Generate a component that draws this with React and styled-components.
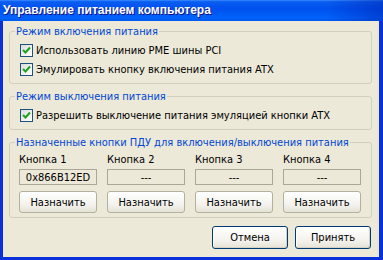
import React from 'react'
import styled, { createGlobalStyle } from 'styled-components'

const Global = createGlobalStyle`
  html, body { margin: 0; padding: 0; background: #ffffff; }
  * { box-sizing: border-box; }
`

const uiFont = `"DejaVu Sans Condensed", "DejaVu Sans", sans-serif`

const Window = styled.div`
  width: 383px;
  height: 260px;
  display: flex;
  flex-direction: column;
  background: #0831d9;
  font-family: ${uiFont};
  font-size: 11px;
  color: #000;
  overflow: hidden;
`

const TitleBar = styled.div`
  height: 21px;
  flex: none;
  display: flex;
  align-items: center;
  padding: 0 0 2px 3px;
  background: linear-gradient(90deg, transparent 85%, rgba(0, 30, 170, 0.45) 100%),
    linear-gradient(180deg, #3d8cff 0%, #0a5ef0 8%, #0050ee 40%, #0062fa 85%, #0059f0 100%);
  color: #fff;
  font-family: "Liberation Sans", Arial, sans-serif;
  font-weight: bold;
  font-size: 12px;
  text-shadow: 1px 1px #0f1089;
`

const Body = styled.div`
  flex: 1;
  min-height: 0;
  margin: 0 4px 3px 3px;
  background: #ece9d8;
  padding: 4px 7px 8px 6px;
  display: flex;
  flex-direction: column;
  gap: 6px;
`

const Group = styled.fieldset`
  margin: 0;
  border: 1px solid #d0d0bf;
  border-radius: 3px;
  padding: ${({ $pad }) => $pad || '3px 8px 4px 10px'};
  min-width: 0;
`

const Legend = styled.legend`
  color: #0046d5;
  padding: 0 1px;
  margin-left: ${({ $shift }) => $shift || '-5px'};
  line-height: 13px;
  white-space: nowrap;
`

const CheckRow = styled.label`
  display: flex;
  align-items: center;
  gap: 3px;
  height: 19px;
`

const Box = styled.span`
  width: 13px;
  height: 13px;
  flex: none;
  border: 1px solid #1c5180;
  background: linear-gradient(135deg, #dcdcd7, #ffffff);
  display: flex;
  align-items: center;
  justify-content: center;
`

const Keys = styled.div`
  display: grid;
  grid-template-columns: repeat(4, 78px);
  column-gap: 10px;
`

const KeyCol = styled.div`
  display: flex;
  flex-direction: column;
`

const KeyLabel = styled.div`
  line-height: 15px;
  height: 15px;
`

const Field = styled.div`
  margin-top: 2px;
  height: 16px;
  border: 1px solid #aca899;
  background: #ece9d8;
  display: flex;
  align-items: center;
  justify-content: center;
`

const Button = styled.button`
  margin: 0;
  padding: 0;
  font-family: ${uiFont};
  font-size: 11px;
  color: #000;
  width: ${({ $w }) => $w || '78px'};
  height: ${({ $h }) => $h || '22px'};
  border-radius: 3px;
  border: 1px solid ${({ $primary }) => ($primary ? '#003c74' : '#b3b09d')};
  background: linear-gradient(180deg, #ffffff 0%, #f4f3ee 60%, #e6e3d6 100%);
  box-shadow: ${({ $primary }) =>
    $primary ? 'inset -1px -1px 0 #d6d0c5, inset 1px 1px 0 #fff' : 'none'};
`

const AssignButton = styled(Button)`
  margin-top: 6px;
`

const Footer = styled.div`
  display: flex;
  justify-content: flex-end;
  gap: 7px;
  padding: 2px 1px 0 0;
`

const Check = () => (
  <svg width="9" height="9" viewBox="0 0 9 9">
    <path d="M1 4 L3.5 6.5 L8 1.5" fill="none" stroke="#21a121" strokeWidth="2" />
  </svg>
)

const keys = [
  { name: 'Кнопка 1', code: '0x866B12ED' },
  { name: 'Кнопка 2', code: '---' },
  { name: 'Кнопка 3', code: '---' },
  { name: 'Кнопка 4', code: '---' },
]

export default function App() {
  return (
    <Window>
      <Global />
      <TitleBar>Управление питанием компьютера</TitleBar>
      <Body>
        <Group>
          <Legend>Режим включения питания</Legend>
          <CheckRow><Box><Check /></Box>Использовать линию PME шины PCI</CheckRow>
          <CheckRow><Box><Check /></Box>Эмулировать кнопку включения питания ATX</CheckRow>
        </Group>
        <Group>
          <Legend>Режим выключения питания</Legend>
          <CheckRow><Box><Check /></Box>Разрешить выключение питания эмуляцией кнопки ATX</CheckRow>
        </Group>
        <Group $pad="3px 8px 4px 9px">
          <Legend $shift="-4px">Назначенные кнопки ПДУ для включения/выключения питания</Legend>
          <Keys>
            {keys.map((k) => (
              <KeyCol key={k.name}>
                <KeyLabel>{k.name}</KeyLabel>
                <Field>{k.code}</Field>
                <AssignButton>Назначить</AssignButton>
              </KeyCol>
            ))}
          </Keys>
        </Group>
        <Footer>
          <Button $primary $w="76px" $h="23px">Отмена</Button>
          <Button $primary $w="76px" $h="23px">Принять</Button>
        </Footer>
      </Body>
    </Window>
  )
}
